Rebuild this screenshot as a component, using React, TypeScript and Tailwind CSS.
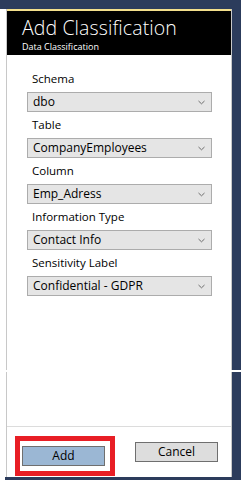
import React from 'react'

const fields = [
  { label: 'Schema', value: 'dbo' },
  { label: 'Table', value: 'CompanyEmployees' },
  { label: 'Column', value: 'Emp_Adress' },
  { label: 'Information Type', value: 'Contact Info' },
  { label: 'Sensitivity Label', value: 'Confidential - GDPR' },
]

const Chevron = () => (
  <svg width="7" height="5" viewBox="0 0 7 5" className="shrink-0">
    <path d="M0.5 1 L3.5 3.8 L6.5 1" fill="none" stroke="#6d6d6d" strokeWidth="1" />
  </svg>
)

const App = () => {
  return (
    <div
      className="w-[241px] h-[480px] bg-white flex flex-col overflow-hidden"
      style={{ fontFamily: '"Open Sans", "Noto Sans", sans-serif' }}
    >
      <div className="h-[9px] bg-[#2c3c5c] shrink-0" />

      <div className="flex h-[361px] shrink-0">
        <div className="w-[6px] shrink-0" />
        <div className="w-[226px] flex flex-col border-x border-x-[#c8c8c8]">
          <div className="h-[2px] bg-[#f3df8c] shrink-0" />
          <div className="h-[44px] bg-black text-white pl-[15px] flex flex-col shrink-0">
            <h1 className="text-[19.5px] leading-[20px] font-light mt-[7px] tracking-[0.1px]">Add Classification</h1>
            <p className="text-[9px] leading-[10px] mt-[4px]">Data Classification</p>
          </div>
          <div className="pt-[11px] pl-[20px] flex flex-col">
            {fields.map((f, i) => (
              <div key={i} className="flex flex-col">
                <div className="h-[26px] flex items-center pl-[5px] text-[11.5px] text-black">{f.label}</div>
                <div className="w-[185px] h-[20px] bg-[#e5e5e5] border border-[#acacac] flex items-center justify-between pl-[5px] pr-[6px] text-[12px] text-black">
                  <span>{f.value}</span>
                  <Chevron />
                </div>
              </div>
            ))}
          </div>
        </div>
        <div className="flex-1 bg-[#2c3c5c]" />
      </div>

      <div className="h-[2px] shrink-0" />

      <div className="flex flex-1">
        <div className="w-[6px] shrink-0" />
        <div className="w-[226px] flex flex-col border-x border-x-[#c8c8c8]">
          <div className="h-[54px] shrink-0" />
          <div className="h-px bg-[#dcdcdc] shrink-0" />
          <div className="flex items-start pt-[9px] pl-[8px]">
            <div className="border-[5px] border-[#e81e25] pt-px pl-[2px] pr-[5px] pb-[5px]">
              <button className="w-[83px] h-[20px] bg-[#9bb7d4] border border-[#6f6f6f] text-[12px] leading-none text-black">
                Add
              </button>
            </div>
            <button className="ml-[20px] mt-[6px] w-[83px] h-[20px] bg-[#dddddd] border border-[#6f6f6f] text-[12px] leading-none text-black">
              Cancel
            </button>
          </div>
        </div>
        <div className="flex-1 bg-[#2c3c5c]" />
      </div>

      <div className="h-[3px] ml-[5px] bg-[#2c3c5c] shrink-0" />
    </div>
  )
}

export default App
